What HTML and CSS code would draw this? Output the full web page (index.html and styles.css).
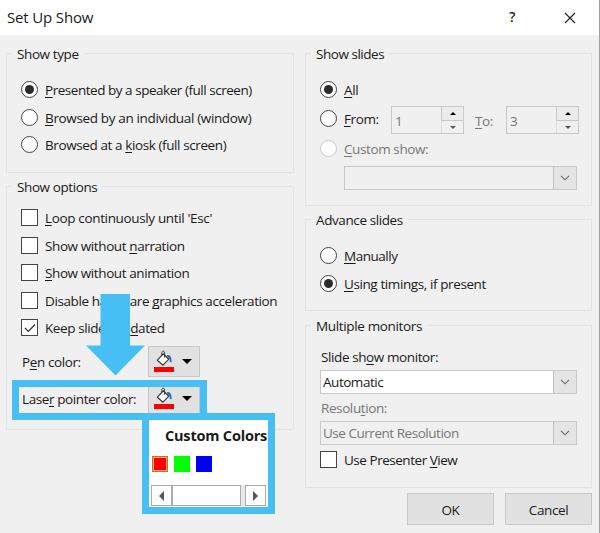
FILE: index.html
```html
<!DOCTYPE html>
<html lang="en">
<head>
<meta charset="utf-8">
<title>Set Up Show</title>
<link rel="stylesheet" href="styles.css">
</head>
<body>
<svg class="defs" width="0" height="0">
  <symbol id="chev" viewBox="0 0 10 6"><path d="M1 .8 5 4.8 9 .8" fill="none" stroke="#666" stroke-width="1.1"/></symbol>
  <symbol id="bucket" viewBox="0 0 22 22">
    <path d="M14 5C17 4.600 18.800 6.600 18.600 12.600L16.600 11.800C17 9 16.400 7.600 14.400 7.200z" fill="#2a6cb0"/>
    <path d="M10.200 3.800 15.800 9.200 10 15.200 4.400 10.200z" fill="#fff" stroke="#3a3a3a" stroke-width="1.200" stroke-linejoin="round"/>
    <path d="M8.800 5.400V2.800c0-2.200 2.800-2.200 2.800 0v4.800" fill="none" stroke="#3a3a3a" stroke-width="1"/>
    <path d="M1 17h20v5H1z" fill="#f00"/>
  </symbol>
</svg>
<div class="dialog">
  <header class="titlebar">
    <h1>Set Up Show</h1>
    <span class="help">?</span>
    <svg class="close" width="12" height="12" viewBox="0 0 12 12"><path d="M1 1 11 11M11 1 1 11" stroke="#222" stroke-width="1.2"/></svg>
  </header>
  <main class="columns">
    <section class="col">
      <div class="group type">
        <h2>Show type</h2>
        <div class="row"><i class="radio on"></i><span class="tight"><u>P</u>resented by a speaker (full screen)</span></div>
        <div class="row"><i class="radio"></i><span class="loose"><u>B</u>rowsed by an individual (window)</span></div>
        <div class="row"><i class="radio"></i><span>Browsed at a <u>k</u>iosk (full screen)</span></div>
      </div>
      <div class="group options">
        <h2>Show options</h2>
        <div class="row"><i class="check"></i><span class="loose"><u>L</u>oop continuously until 'Esc'</span></div>
        <div class="row"><i class="check"></i><span>Show without <u>n</u>arration</span></div>
        <div class="row"><i class="check"></i><span><u>S</u>how without animation</span></div>
        <div class="row"><i class="check"></i><span>Disable hardware <u>g</u>raphics acceleration</span></div>
        <div class="row"><i class="check"><svg width="14" height="14" viewBox="0 0 14 14"><path d="M2 7 5.3 10.3 12 3.5" fill="none" stroke="#333" stroke-width="1.2"/></svg></i><span>Keep slides up<u>d</u>ated</span></div>
        <div class="color pen"><span>P<u>e</u>n color:</span><button><svg width="22" height="22"><use href="#bucket"/></svg><b class="drop"></b></button></div>
        <div class="color laser"><span>Lase<u>r</u> pointer color:</span><button><svg width="22" height="22"><use href="#bucket"/></svg><b class="drop"></b></button></div>
      </div>
    </section>
    <section class="col">
      <div class="group slides">
        <h2 class="tight">Show slides</h2>
        <div class="row all"><i class="radio on"></i><span><u>A</u>ll</span></div>
        <div class="row from"><i class="radio"></i><span class="fromtext"><u>F</u>rom:</span>
          <div class="spin"><span>1</span><div><b class="up"></b><b class="down"></b></div></div>
          <span class="to"><u>T</u>o:</span>
          <div class="spin"><span>3</span><div><b class="up"></b><b class="down"></b></div></div>
        </div>
        <div class="row custom"><i class="radio off"></i><span><u>C</u>ustom show:</span></div>
        <div class="select indent off"><span></span><b><svg width="10" height="6"><use href="#chev"/></svg></b></div>
      </div>
      <div class="group advance">
        <h2>Advance slides</h2>
        <div class="row"><i class="radio"></i><span class="tight"><u>M</u>anually</span></div>
        <div class="row"><i class="radio on"></i><span><u>U</u>sing timings, if present</span></div>
      </div>
      <div class="group monitors">
        <h2 class="loose">Multiple monitors</h2>
        <label class="mon">Slide sh<u>o</u>w monitor:</label>
        <div class="select"><span class="tight">Automatic</span><b><svg width="10" height="6"><use href="#chev"/></svg></b></div>
        <label class="res">Resolu<u>t</u>ion:</label>
        <div class="select off"><span class="tight">Use Current Resolution</span><b><svg width="10" height="6"><use href="#chev"/></svg></b></div>
        <div class="row presenter"><i class="check"></i><span class="tight">Use Presenter <u>V</u>iew</span></div>
      </div>
      <footer><button>OK</button><button>Cancel</button></footer>
    </section>
  </main>
  <div class="highlight"></div>
  <div class="popup">
    <h3>Custom Colors</h3>
    <div class="swatches"><i class="red"></i><i class="green"></i><i class="blue"></i></div>
    <div class="scroll"><b><i class="left"></i></b><span></span><b><i class="right"></i></b></div>
  </div>
  <svg class="arrow" width="60" height="82" viewBox="0 0 60 82"><path d="M14.5 0H44V51.5H59L29.5 81.5 0 51.5H14.5z" fill="#47bff4"/></svg>
</div>
</body>
</html>
```
FILE: styles.css
```css
* { box-sizing: border-box; }
body { margin: 0; font: 13.5px/20px "Open Sans", "Noto Sans", sans-serif; color: #1a1a1a; letter-spacing: -0.4px; }
h1, h2, h3 { margin: 0; font: inherit; }
i { font-style: normal; }
u { text-decoration-thickness: 1px; text-underline-offset: 2px; text-decoration-skip-ink: none; }
button { font: inherit; color: inherit; letter-spacing: inherit; padding: 0; border: 1px solid #c8c8c8; background: #e1e1e1; }
.tight { letter-spacing: -0.47px; }
.loose { letter-spacing: -0.35px; }
.defs { position: absolute; }
.dialog { position: relative; width: 600px; height: 533px; background: #f0f0f0; border-right: 1px solid #a0a0a0; overflow: hidden; white-space: nowrap; }
.titlebar { height: 35px; background: #fff; display: flex; align-items: center; padding: 0 23px 0 7px; }
.titlebar h1 { flex: 1; font-size: 15px; letter-spacing: -0.15px; padding-bottom: 1px; }
.help { width: 8px; margin-right: 48px; padding-bottom: 1px; text-align: center; font-weight: 600; }
.columns { display: grid; grid-template-columns: 288px 287px; column-gap: 11px; padding: 18px 0 0 6px; }
.group { border: 1px solid #e3e3e3; padding-left: 14px; margin-bottom: 13px; }
.group h2 { width: max-content; height: 20px; line-height: 19px; margin: -9px 0 0 -9px; padding: 0 5px; background: #f0f0f0; }
.row { display: flex; align-items: center; height: 27.5px; }
.row > span { padding-top: 1px; }
.radio, .check { flex: none; width: 17px; height: 17px; border: 1px solid #444; background: #fff; margin-right: 7px; display: flex; align-items: center; justify-content: center; }
.radio { border-radius: 50%; }
.radio.on::after { content: ""; width: 9px; height: 9px; border-radius: 50%; background: #2b2b2b; }
.radio.off { border-color: #c8c8c8; }
.type { height: 120px; }
.type h2 { margin-bottom: 11px; }
.options { height: 244px; margin-bottom: 0; }
.options h2 { margin-bottom: 6px; }
.color { display: flex; align-items: center; padding-left: 1px; }
.color span { width: 126px; padding-top: 2px; }
.color button { width: 52px; height: 31px; display: flex; align-items: center; padding-left: 4px; }
.pen { margin-top: 4px; }
.laser { margin-top: 6px; }
.drop { margin-left: 7px; border: 5px solid transparent; border-top-color: #000; border-bottom: 0; }
.slides { height: 153px; }
.slides h2 { margin-bottom: 11px; }
.from { height: 30px; }
.from .fromtext { width: 47px; }
.to { width: 42px; text-align: center; color: #777; padding-top: 5px !important; padding-right: 2px; }
.spin { width: 73px; height: 28px; border: 1px solid #c8c8c8; display: flex; color: #777; margin-top: 3px; }
.spin span { flex: 1; padding: 4px 0 0 3px; }
.spin div { width: 22px; display: grid; grid-template-rows: 14px 12px; }
.spin b { display: grid; place-items: center; border-left: 1px solid #ddd; }
.spin b:first-child { border: 1px solid #c8c8c8; border-width: 0 0 1px 1px; background: #ececec; }
.up::after { content: ""; border: 3.5px solid transparent; border-bottom-color: #000; border-top: 0; }
.down::after { content: ""; border: 3.5px solid transparent; border-top-color: #555; border-bottom: 0; }
.custom { height: 29px; color: #777; }
.select { width: 257px; height: 24px; border: 1px solid #c8c8c8; background: #fff; display: flex; }
.select span { flex: 1; padding: 1px 0 0 2px; }
.select b { width: 23px; border-left: 1px solid #c0c0c0; background: #e4e4e4; display: grid; place-items: center; }
.select.off { background: #f0f0f0; color: #777; }
.indent { width: 233px; margin: 3px 0 0 24px; }
.advance { height: 92px; margin-bottom: 14px; }
.advance h2 { margin-bottom: 11px; }
.monitors { height: 163px; margin-bottom: 5px; }
label { display: block; padding-left: 1px; }
.mon { margin: 10px 0 3px; }
.res { margin: 4px 0 3px; height: 20px; color: #777; }
.presenter { height: 28px; }
footer { display: flex; justify-content: flex-end; gap: 11px; }
footer button { width: 87px; height: 32px; padding-top: 1px; }
.highlight { position: absolute; left: 12px; top: 380px; width: 195px; height: 40px; border: 7.5px solid #47bff4; }
.popup { position: absolute; left: 142px; top: 413px; width: 133px; height: 101px; border: 7px solid #47bff4; background: #fff; overflow: hidden; }
.popup h3 { font-size: 14.5px; font-weight: 700; letter-spacing: -0.2px; margin: 6px 0 0 16px; }
.swatches { display: flex; gap: 6px; margin: 10px 0 0 3px; }
.swatches i { width: 16px; height: 16px; }
.red { background: #f00; border: 1px solid #e2622a; box-shadow: inset 0 0 0 1px #f5b183; }
.green { background: #0f0; }
.blue { background: #00f; }
.scroll { display: flex; margin: 13px 0 0 2px; width: 115px; height: 21px; background: #e8e8e8; }
.scroll b { width: 21px; border: 1px solid #ababab; background: #fff; display: grid; place-items: center; }
.scroll span { width: 69px; border: 1px solid #ababab; background: #fff; margin-right: 4px; }
.left { border: 5px solid transparent; border-right-color: #555; border-left: 0; }
.right { border: 5px solid transparent; border-left-color: #555; border-right: 0; }
.arrow { position: absolute; left: 86px; top: 294px; }
```
